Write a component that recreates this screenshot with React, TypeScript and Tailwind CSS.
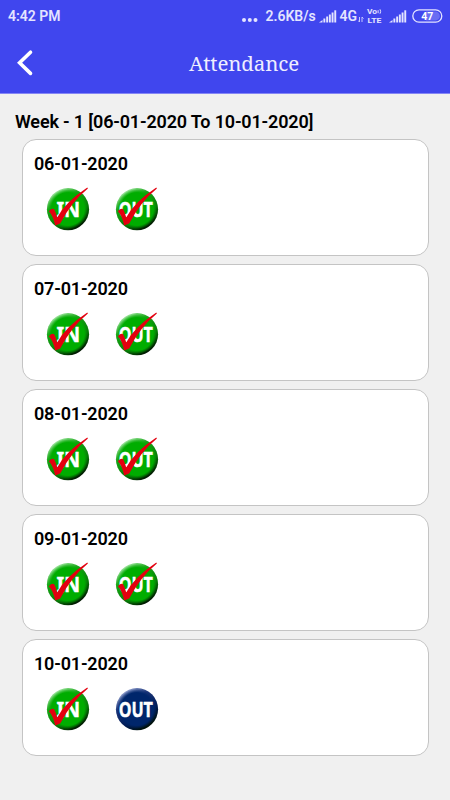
import React from "react";

const days = [
  { date: "06-01-2020", out: true },
  { date: "07-01-2020", out: true },
  { date: "08-01-2020", out: true },
  { date: "09-01-2020", out: true },
  { date: "10-01-2020", out: false },
];

function Signal() {
  return (
    <svg width="18" height="13" viewBox="0 0 18 13" fill="#e4e4ff" className="shrink-0">
      <path d="M0 12.5 3.5 10v2.5z" />
      <rect x="4.4" y="8.5" width="1.9" height="4" />
      <rect x="7.2" y="6.5" width="1.9" height="6" />
      <rect x="9.9" y="4.5" width="1.9" height="8" />
      <rect x="12.6" y="2.5" width="1.9" height="10" />
      <rect x="15.3" y="0.3" width="1.9" height="12.2" />
    </svg>
  );
}

function StatusBar() {
  return (
    <div className="flex h-8 items-center pl-2 font-['Roboto',sans-serif] text-sm font-semibold text-[#e4e4ff]">
      <span className="w-[233.5px] shrink-0">4:42 PM</span>
      <svg width="16" height="6" viewBox="0 0 16 6" fill="#e4e4ff" className="mt-[7px] shrink-0">
        <circle cx="2" cy="3" r="2" />
        <circle cx="7.8" cy="3" r="2" />
        <circle cx="13.5" cy="3" r="2" />
      </svg>
      <span className="ml-2 w-[53.5px] shrink-0 whitespace-nowrap">2.6KB/s</span>
      <Signal />
      <span className="ml-[2.5px] w-[18.5px] shrink-0">4G</span>
      <svg width="6" height="5" viewBox="0 0 6 5" className="mt-[6px] shrink-0" fill="none" stroke="#c5c6ff" strokeWidth="1">
        <path d="M1.5 0v5M0 3.5l1.5 1.5M4 5V0M5.5 1.5 4 0" />
      </svg>
      <svg width="16" height="14" viewBox="0 0 16 14" fill="#e4e4ff" className="ml-[3px] shrink-0 overflow-visible font-['Roboto',sans-serif] font-bold">
        <text x="0" y="5.3" fontSize="7.4" textLength="10" lengthAdjust="spacingAndGlyphs">Vo</text>
        <path d="M11.1 1.2v3M13 .3q1.3 2.2 0 4.4" fill="none" stroke="#e4e4ff" />
        <text x="0.5" y="13.5" fontSize="7.4" textLength="14" lengthAdjust="spacingAndGlyphs">LTE</text>
      </svg>
      <div className="ml-1.5 flex shrink-0">
        <Signal />
      </div>
      <svg width="31" height="14" viewBox="0 0 31 14" className="ml-[5px] shrink-0 font-['Roboto',sans-serif] font-bold">
        <rect x="0.8" y="0.8" width="29" height="12.4" rx="6.2" fill="none" stroke="#e4e4ff" strokeWidth="1.3" />
        <path d="M14 2.6h9.5a4.4 4.4 0 0 1 0 8.8H14z" fill="#7c7ef4" opacity=".7" />
        <text x="9.2" y="10.7" fontSize="10.5" fill="#fff">47</text>
      </svg>
    </div>
  );
}

function Badge({ label, checked }: { label: "IN" | "OUT"; checked: boolean }) {
  const id = `shade-${label}-${checked}`;
  return (
    <svg width="46" height="46" viewBox="0 0 46 46" className="shrink-0 overflow-visible">
      <defs>
        <linearGradient id={id} x1=".25" y1=".05" x2=".8" y2=".92">
          <stop offset="0" stopColor={checked ? "#9be59b" : "#8c9ccc"} />
          <stop offset=".28" stopColor={checked ? "#16a516" : "#1c367a"} />
          <stop offset=".68" stopColor={checked ? "#087c08" : "#001b55"} />
          <stop offset="1" stopColor="#001000" />
        </linearGradient>
        <radialGradient id={`${id}-face`}>
          <stop offset=".82" stopColor={checked ? "#00ad00" : "#00266b"} />
          <stop offset="1" stopColor={checked ? "#00ad00" : "#00266b"} stopOpacity="0" />
        </radialGradient>
      </defs>
      <circle cx="24" cy="23.2" r="21.1" fill={`url(#${id})`} />
      <circle cx="23.8" cy="23" r="20" fill={`url(#${id}-face)`} />
      <text
        x={label === "IN" ? 12.4 : 5.8}
        y="30.6"
        fontSize="20.5"
        fontWeight="700"
        fill="#fff"
        stroke="#fff"
        strokeWidth="0.4"
        textLength={label === "IN" ? 23.6 : 34}
        lengthAdjust="spacingAndGlyphs"
        className="font-['Noto_Sans','Open_Sans',sans-serif]"
      >
        {label}
      </text>
      {checked && (
        <path
          d="M4.8 25.2Q8 21.8 10.2 23.2Q12 26.6 13.2 31.4Q22 15.6 43.3 1.6L43.9 2.6Q28 15.5 16.2 37.4L11.2 39.4Q9 29.5 4.8 25.2Z"
          fill="#e3000f"
        />
      )}
    </svg>
  );
}

export default function App() {
  return (
    <main className="min-h-[800px] w-[450px] bg-[#f0f0f0]">
      <header className="h-[94px] border-b border-[#8586f5] bg-[#4046ee]">
        <StatusBar />
        <div className="flex h-[61px] items-center pl-4">
          <svg width="18" height="28" viewBox="0 0 18 28" fill="none" stroke="#fff" strokeWidth="3.6" className="shrink-0">
            <path d="M14.5 3.2 3.6 13.8 14.5 24.4" strokeLinecap="round" />
          </svg>
          <h1 className="ml-[155px] mt-px whitespace-nowrap font-['Noto_Serif','DejaVu_Serif_Condensed','DejaVu_Serif',serif] text-[20.5px] tracking-[-0.15px] text-[#eeeeff]">
            Attendance
          </h1>
        </div>
      </header>
      <section className="font-['Roboto',sans-serif] text-lg font-semibold tracking-[-0.16px] text-black">
        <h2 className="h-[45px] whitespace-nowrap pl-[15px] pt-[14px] leading-[27px]">
          Week - 1 [06-01-2020 To 10-01-2020]
        </h2>
        <div className="flex flex-col gap-2 pl-[21.5px] pr-[21px]">
          {days.map((day) => (
            <article key={day.date} className="h-[117px] rounded-[14px] border border-[#c4c4c4] bg-white pl-[11.5px] pt-[11px]">
              <h3 className="h-[27px] leading-[26px]">{day.date}</h3>
              <div className="mt-2 flex gap-[23px] pl-[10px]">
                <Badge label="IN" checked />
                <Badge label="OUT" checked={day.out} />
              </div>
            </article>
          ))}
        </div>
      </section>
    </main>
  );
}
